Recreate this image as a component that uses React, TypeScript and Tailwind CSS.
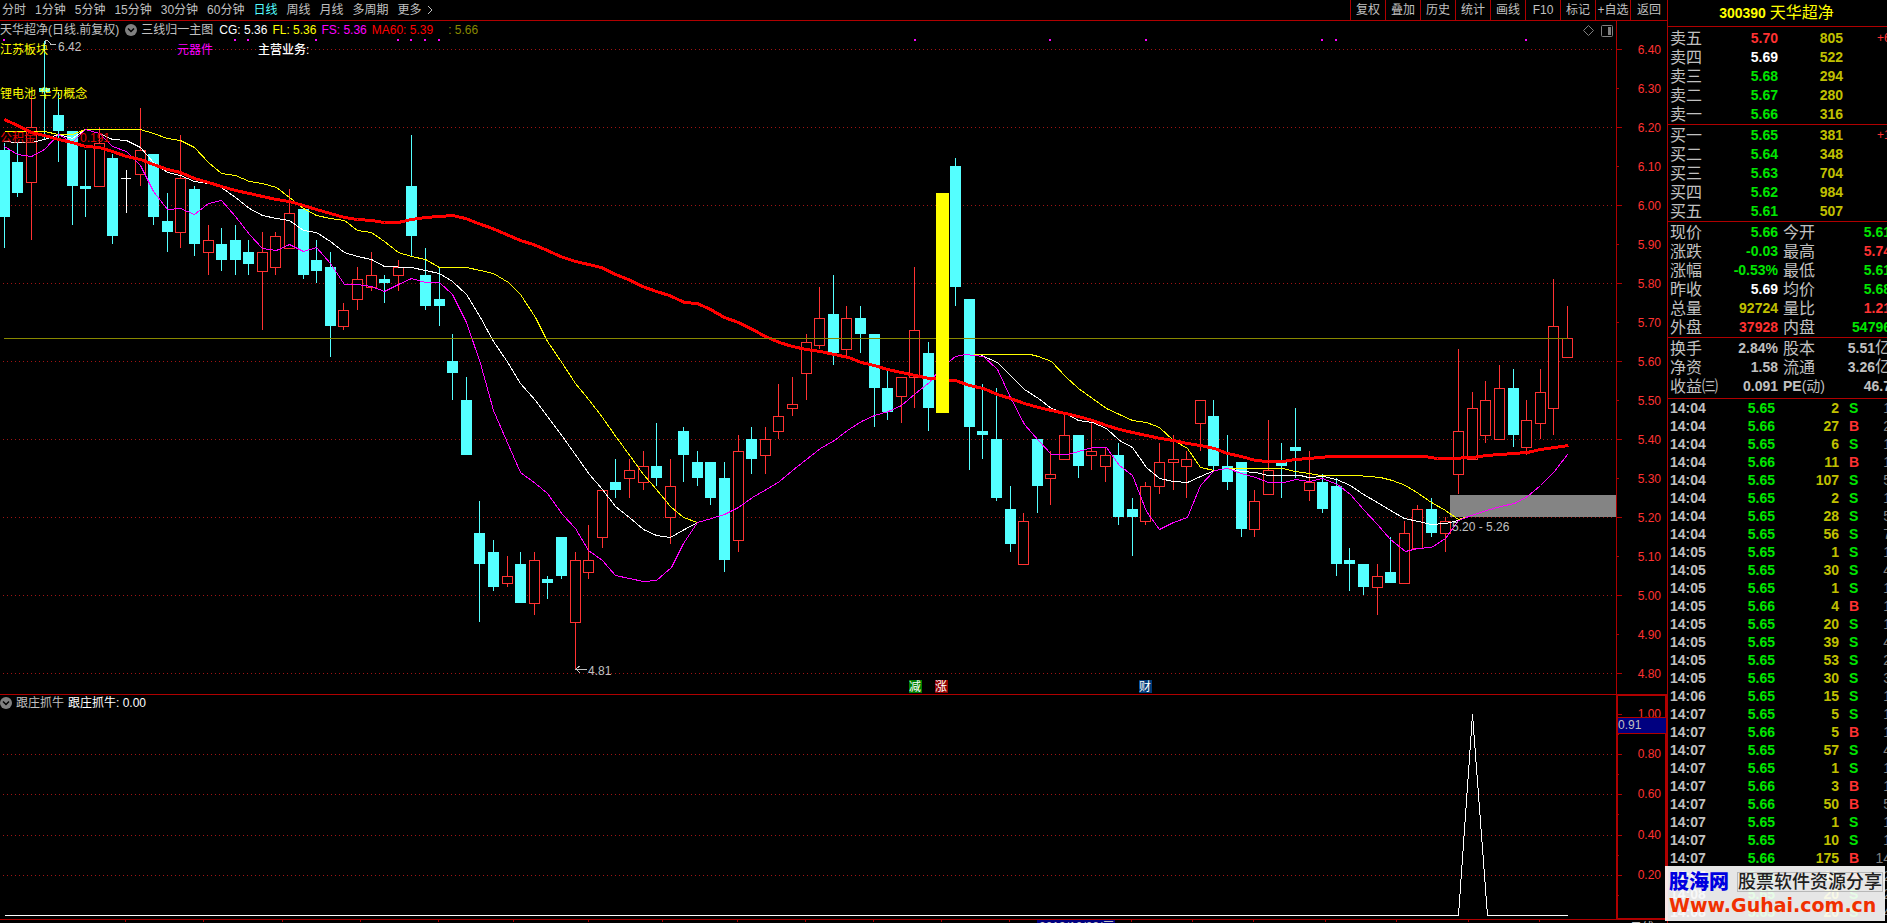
import { clsx } from "clsx";

const FONT = "font-['Liberation_Sans','Noto_Sans_CJK_SC',sans-serif]";

const periods = ["分时", "1分钟", "5分钟", "15分钟", "30分钟", "60分钟", "日线", "周线", "月线", "多周期", "更多"];
const tools = ["复权", "叠加", "历史", "统计", "画线", "F10", "标记", "+自选", "返回"];

// open, high, low, close
const candles: [number, number, number, number][] = [
    [6.14, 6.16, 5.89, 5.97], [6.11, 6.16, 6.02, 6.03], [6.06, 6.28, 5.91, 6.2], [6.3, 6.42, 6.17, 6.29],
    [6.23, 6.29, 6.11, 6.19], [6.19, 6.19, 5.95, 6.05], [6.05, 6.14, 5.97, 6.04], [6.05, 6.2, 6.05, 6.16],
    [6.12, 6.13, 5.9, 5.92], [6.07, 6.09, 5.98, 6.07], [6.08, 6.25, 6.05, 6.14], [6.13, 6.13, 5.95, 5.97],
    [5.96, 6.03, 5.88, 5.93], [5.93, 6.18, 5.89, 6.07], [6.04, 6.05, 5.87, 5.9], [5.88, 5.95, 5.82, 5.91],
    [5.9, 5.94, 5.83, 5.86], [5.91, 5.95, 5.82, 5.86], [5.88, 5.91, 5.82, 5.85], [5.83, 5.93, 5.68, 5.88],
    [5.84, 5.93, 5.82, 5.92], [5.89, 6.04, 5.89, 5.98], [5.99, 5.99, 5.81, 5.82], [5.86, 5.91, 5.8, 5.83],
    [5.84, 5.88, 5.61, 5.69], [5.69, 5.75, 5.68, 5.73], [5.76, 5.84, 5.73, 5.81], [5.79, 5.88, 5.78, 5.82],
    [5.81, 5.82, 5.75, 5.8], [5.82, 5.86, 5.78, 5.84], [6.05, 6.18, 5.87, 5.92], [5.82, 5.89, 5.73, 5.74],
    [5.76, 5.84, 5.69, 5.74], [5.6, 5.67, 5.5, 5.57], [5.5, 5.56, 5.36, 5.36], [5.16, 5.24, 4.93, 5.08],
    [5.11, 5.14, 5.01, 5.02], [5.03, 5.1, 5.02, 5.05], [5.08, 5.11, 4.98, 4.98], [4.98, 5.11, 4.95, 5.09],
    [5.04, 5.05, 4.99, 5.03], [5.15, 5.15, 5.04, 5.05], [4.93, 5.11, 4.81, 5.09], [5.06, 5.18, 5.04, 5.09],
    [5.15, 5.27, 5.12, 5.27], [5.29, 5.35, 5.25, 5.27], [5.3, 5.35, 5.25, 5.32], [5.29, 5.37, 5.27, 5.33],
    [5.33, 5.44, 5.28, 5.3], [5.2, 5.35, 5.13, 5.28], [5.42, 5.43, 5.29, 5.36], [5.34, 5.37, 5.28, 5.3],
    [5.34, 5.34, 5.23, 5.25], [5.3, 5.34, 5.06, 5.09], [5.14, 5.41, 5.11, 5.37], [5.4, 5.43, 5.31, 5.35],
    [5.36, 5.43, 5.31, 5.4], [5.42, 5.54, 5.4, 5.46], [5.48, 5.56, 5.46, 5.49], [5.57, 5.67, 5.5, 5.65],
    [5.64, 5.79, 5.63, 5.71], [5.72, 5.82, 5.59, 5.62], [5.63, 5.74, 5.61, 5.71], [5.71, 5.74, 5.62, 5.67],
    [5.67, 5.67, 5.43, 5.53], [5.53, 5.58, 5.45, 5.47], [5.51, 5.56, 5.44, 5.56], [5.56, 5.84, 5.48, 5.68],
    [5.62, 5.65, 5.42, 5.48], [5.47, 6.03, 5.47, 6.03], [6.1, 6.12, 5.74, 5.79], [5.76, 5.76, 5.32, 5.43],
    [5.42, 5.54, 5.35, 5.41], [5.4, 5.53, 5.24, 5.25], [5.22, 5.28, 5.11, 5.13], [5.08, 5.21, 5.08, 5.19],
    [5.4, 5.4, 5.21, 5.28], [5.3, 5.37, 5.23, 5.31], [5.35, 5.47, 5.35, 5.41], [5.41, 5.41, 5.3, 5.33],
    [5.36, 5.44, 5.32, 5.37], [5.33, 5.38, 5.29, 5.36], [5.36, 5.39, 5.18, 5.2], [5.22, 5.25, 5.1, 5.2],
    [5.19, 5.29, 5.18, 5.28], [5.28, 5.39, 5.26, 5.34], [5.34, 5.41, 5.27, 5.35], [5.33, 5.37, 5.25, 5.35],
    [5.44, 5.5, 5.37, 5.5], [5.46, 5.5, 5.32, 5.33], [5.33, 5.41, 5.27, 5.29], [5.34, 5.34, 5.15, 5.17],
    [5.17, 5.27, 5.15, 5.24], [5.26, 5.45, 5.26, 5.32], [5.34, 5.39, 5.25, 5.33], [5.38, 5.48, 5.3, 5.37],
    [5.27, 5.37, 5.24, 5.29], [5.29, 5.31, 5.21, 5.22], [5.28, 5.3, 5.05, 5.08], [5.09, 5.12, 5.01, 5.08],
    [5.08, 5.08, 5.0, 5.02], [5.02, 5.08, 4.95, 5.05], [5.06, 5.15, 5.03, 5.03], [5.03, 5.19, 5.03, 5.16],
    [5.12, 5.23, 5.12, 5.22], [5.22, 5.25, 5.15, 5.16], [5.16, 5.2, 5.11, 5.19], [5.31, 5.63, 5.26, 5.42],
    [5.35, 5.52, 5.35, 5.48], [5.41, 5.55, 5.39, 5.5], [5.4, 5.59, 5.4, 5.53], [5.53, 5.58, 5.38, 5.41],
    [5.38, 5.5, 5.36, 5.45], [5.44, 5.58, 5.4, 5.52], [5.48, 5.81, 5.41, 5.69], [5.61, 5.74, 5.61, 5.66],
];
const LIMIT_UP = 69;

const priceY = (p: number) => Math.round(49 + (6.4 - p) * 390);
const candleX = (i: number) => Math.floor(4.1 + i * 13.594);

const ma60 =
    "4,119 17,125 31,132 44,135 58,139 72,142 85,146 99,147 112,151 126,156 140,159 153,164 167,169 180,172 194,178 208,182 221,186 235,190 249,193 262,196 276,199 289,201 303,205 316,209 330,213 344,217 357,219 371,220 384,222 398,222 411,219 425,217 439,216 452,215 465,218 478,223 492,228 506,234 520,240 533,244 547,250 560,256 575,261 588,264 601,267 615,274 628,279 642,286 656,291 669,295 684,302 697,303 710,309 724,317 738,322 752,329 765,336 779,342 792,346 806,349 820,351 834,354 848,357 861,362 874,365 887,369 901,372 915,375 929,378 955,380 969,385 983,388 997,394 1010,398 1024,403 1038,407 1051,410 1065,413 1078,416 1092,420 1106,425 1119,429 1132,432 1146,435 1160,438 1173,440 1187,443 1200,445 1214,448 1227,453 1241,456 1255,460 1268,461 1282,461 1295,459 1308,458 1330,456 1424,456 1437,458 1450,458 1472,457 1486,455 1500,454 1513,453 1527,452 1540,449 1554,447 1568,445";
const cg = [
    "4,141 17,142 31,142 44,139 58,134 72,138 85,129 99,133 112,139 126,140 140,147 153,162 167,172 180,175 194,181 208,183 221,187 235,197 249,208 262,215 276,218 289,220 303,230 316,232 330,241 344,252 357,256 371,259 384,266 411,267 439,273 452,281 466,294 480,317 493,341 506,360 520,383 535,400 562,436 589,474 602,489 615,506 629,517 643,529 656,535 670,537 684,529 697,522",
    "981,355 997,362 1010,375 1024,389 1038,398 1051,408 1065,413 1078,420 1092,422 1106,428 1119,440 1132,447 1146,467 1159,478 1173,481 1187,482 1200,476 1214,470 1227,468 1241,471 1255,472 1268,475 1300,475 1308,477 1323,476 1336,479 1350,485 1363,494 1377,502 1390,510 1404,518 1418,521 1431,524 1445,523 1458,520 1463,518",
];
const fl = [
    "4,131 44,131 58,134 72,134 85,129 140,129 153,133 167,138 180,140 194,147 208,162 221,173 235,175 249,181 262,183 276,187 289,197 303,208 316,215 330,218 344,220 357,230 371,232 384,241 398,252 411,256 425,259 439,267 466,267 480,270 493,273 508,282 520,294 535,317 547,341 562,363 575,383 589,400 602,417 616,437 630,456 643,474 656,489 670,506 683,517 697,522",
    "973,354 1030,354 1038,356 1051,361 1065,376 1078,388 1092,398 1106,408 1119,414 1132,420 1146,422 1159,427 1173,440 1187,448 1200,467 1214,470 1227,468 1282,468 1295,471 1309,473 1320,475 1357,475 1380,477 1392,480 1405,485 1418,493 1431,502 1445,510 1458,519 1471,515",
];
const fs =
    "4,146 17,154 31,156 44,149 58,134 72,142 85,129 99,133 112,146 126,151 140,165 153,191 167,209 180,208 194,214 208,203 221,200 235,216 249,234 262,248 276,250 289,244 303,251 316,247 330,263 344,284 357,284 371,286 384,291 398,284 411,278 425,282 439,282 452,294 466,322 480,363 493,410 506,440 520,472 535,483 547,493 562,514 575,528 588,550 602,560 615,575 629,578 643,581 656,580 671,567 683,543 697,522 711,518 724,514 738,507 752,497 766,489 779,481 792,470 806,459 820,448 834,440 847,430 861,421 874,415 888,411 901,405 915,393 929,382 936,373 950,360 955,356 965,354 983,356 997,369 1010,397 1024,424 1038,440 1051,454 1067,454 1078,451 1092,447 1106,447 1119,465 1132,475 1146,511 1159,529 1173,522 1187,517 1200,485 1214,470 1227,468 1241,473 1255,477 1268,482 1284,482 1295,479 1309,481 1322,478 1337,484 1350,494 1363,509 1377,524 1390,539 1405,551 1417,548 1431,547 1445,538 1458,520 1471,515 1486,510 1500,506 1514,503 1527,496 1540,485 1554,471 1567,454";

const signalDots = [4, 235, 248, 316, 398, 411, 425, 439, 915, 1050, 1146, 1322, 1336, 1526];
const badges = [
    { x: 909, text: "减", fill: "#008000" },
    { x: 935, text: "涨", fill: "#900000" },
    { x: 1139, text: "财", fill: "#003a78" },
];
const subLevels: [string, number][] = [["1.00", 714], ["0.80", 754], ["0.60", 794], ["0.40", 835], ["0.20", 875]];
const dateTicks = [125, 203, 282, 360, 438, 513, 588, 662, 737, 805, 873, 941, 1009, 1131, 1192, 1253, 1325, 1396, 1468, 1539];

function Candle({ i }: { i: number }) {
    const [open, high, low, close] = candles[i];
    const x = candleX(i);
    const top = priceY(Math.max(open, close));
    const bottom = priceY(Math.min(open, close));
    const wickTop = priceY(high);
    const wickHeight = priceY(low) - wickTop;

    if (i === LIMIT_UP) return <rect x={x - 6} y={top} width={13} height={bottom - top + 1} fill="#ffff00" />;
    if (open === close) {
        return (
            <g fill="#ffffff">
                <rect x={x} y={wickTop} width={1} height={wickHeight} />
                <rect x={x - 5} y={top} width={10} height={1} />
            </g>
        );
    }
    if (close < open) {
        return (
            <g fill="#54ffff">
                <rect x={x} y={wickTop} width={1} height={wickHeight} />
                <rect x={x - 5} y={top} width={11} height={bottom - top} />
            </g>
        );
    }
    return (
        <g fill="#ff3232">
            <rect x={x} y={wickTop} width={1} height={wickHeight} />
            <rect x={x - 5} y={top} width={11} height={bottom - top + 1} />
            <rect x={x - 4} y={top + 1} width={9} height={bottom - top - 1} fill="#000000" />
        </g>
    );
}

function Grid({ y }: { y: number }) {
    return <path d={`M3 ${y + 0.5}H1613`} stroke="#a01414" strokeDasharray="1 3" />;
}

function Line({ points, color }: { points: string; color: string }) {
    return <polyline points={points} stroke={color} fill="none" transform="translate(.5 .5)" />;
}

function MainChart() {
    const levels = Array.from({ length: 17 }, (_, i) => 6.4 - i * 0.1);
    return (
        <svg viewBox="0 21 1667 673" className="block h-auto w-full text-[12px]" shapeRendering="crispEdges">
            {levels.map((p, i) => i % 2 === 0 && <Grid key={i} y={priceY(p)} />)}
            <rect x={1450} y={495} width={166} height={22} fill="#848484" />
            {candles.map((_, i) => i !== LIMIT_UP && <Candle key={i} i={i} />)}

            <Line points={cg[0]} color="#ffffff" />
            <Line points={cg[1]} color="#ffffff" />
            <Line points={fl[0]} color="#ffff00" />
            <Line points={fl[1]} color="#ffff00" />
            <Line points={fs} color="#ff00ff" />
            <polyline points={ma60} fill="none" stroke="#ff0000" strokeWidth={3} transform="translate(.5 .5)" />
            {/* the limit-up bar covers the averages */}
            <Candle i={LIMIT_UP} />
            <rect x={4} y={338} width={932} height={1} fill="#888800" />
            <rect x={949} y={338} width={619} height={1} fill="#888800" />
            {signalDots.map((x) => <rect key={x} x={x - 1} y={39} width={2} height={2} fill="#ff00ff" />)}

            {/* high / low markers */}
            <path d="M45 40.5h3M45 40v4M48 41l3 3M50 44.5h6" stroke="#c0c0c0" fill="none" />
            <path d="M575 669.5h12M576 669l4-3M576 669l4 4" stroke="#c0c0c0" fill="none" />
            <g fill="#c0c0c0">
                <text x={58} y={51}>6.42</text>
                <text x={588} y={675}>4.81</text>
                <text x={1452} y={531}>5.20 - 5.26</text>
            </g>
            <g fill="#ffff00">
                <text x={0} y={54}>江苏板块</text>
                <text x={0} y={98}>锂电池 华为概念</text>
            </g>
            <text x={177} y={54} fill="#ff00ff">元器件</text>
            <text x={258} y={54} fill="#ffffff" fontWeight={500}>主营业务:</text>
            <g fill="#e00000">
                <text x={0} y={142}>公积金</text>
                <text x={80} y={142}>0.191</text>
            </g>
            {badges.map((b) => (
                <g key={b.x}>
                    <rect x={b.x} y={680} width={13} height={13} fill={b.fill} />
                    <text x={b.x} y={691} fill="#ffffff">{b.text}</text>
                </g>
            ))}

            {/* price axis */}
            <rect x={1616} y={21} width={1} height={673} fill="#b00000" />
            {levels.map((p, i) => (
                <g key={i}>
                    <rect x={1617} y={priceY(p)} width={i % 2 ? 2 : 5} height={1} fill="#b00000" />
                    <text x={1661} y={priceY(p) + 5} textAnchor="end" fill="#ff3232">{p.toFixed(2)}</text>
                </g>
            ))}
        </svg>
    );
}

function SubChart() {
    return (
        <svg viewBox="0 694 1667 229" className="block h-auto w-full text-[12px]" shapeRendering="crispEdges">
            <rect x={0} y={694} width={1667} height={1} fill="#b00000" />
            {subLevels.slice(1).map(([label, y]) => <Grid key={label} y={y} />)}
            <Line points="4,915 1458,915 1472,714 1487,915 1567,915" color="#ffffff" />

            <rect x={1617} y={695} width={49} height={224} fill="none" stroke="#b00000" strokeWidth={2} />
            {subLevels.map(([label, y]) => (
                <g key={label}>
                    <rect x={1618} y={y} width={4} height={1} fill="#b00000" />
                    <rect x={1618} y={y + 20} width={1} height={1} fill="#b00000" />
                    <text x={1661} y={y + 4} textAnchor="end" fill="#ff3232">{label}</text>
                </g>
            ))}
            <rect x={1618} y={717} width={48} height={17} fill="#b00000" />
            <rect x={1618} y={718} width={48} height={15} fill="#000080" />
            <text x={1618} y={729} fill="#c0c0c0">0.91</text>

            <rect x={0} y={919} width={1616} height={1} fill="#b00000" />
            {dateTicks.map((x) => <rect key={x} x={x} y={920} width={1} height={2} fill="#b00000" />)}
            <rect x={1037} y={920} width={78} height={3} fill="#000080" />
            <text x={1039} y={931} fill="#c0c0c0">2019/10/09/三</text>
            <text x={1630} y={932} fill="#c0c0c0">日线</text>
        </svg>
    );
}

function Chevron() {
    return (
        <svg viewBox="0 0 12 12" className="size-3 shrink-0">
            <circle cx={6} cy={6} r={6} fill="#808080" />
            <path d="M3 4.5l3 3 3-3" fill="none" stroke="#000000" strokeWidth={1.5} />
        </svg>
    );
}

const tone = {
    red: "text-[#ff3232]",
    green: "text-[#00e600]",
    white: "text-white",
    yellow: "text-[#c0c000]",
    gray: "text-[#c0c0c0]",
};
type Tone = keyof typeof tone;

const asks: [string, string, Tone, string, string?][] = [
    ["卖五", "5.70", "red", "805", "+6"],
    ["卖四", "5.69", "white", "522"],
    ["卖三", "5.68", "green", "294"],
    ["卖二", "5.67", "green", "280"],
    ["卖一", "5.66", "green", "316"],
];
const bids: typeof asks = [
    ["买一", "5.65", "green", "381", "+1"],
    ["买二", "5.64", "green", "348"],
    ["买三", "5.63", "green", "704"],
    ["买四", "5.62", "green", "984"],
    ["买五", "5.61", "green", "507"],
];
const quotes: [string, string, Tone, string, string, Tone][] = [
    ["现价", "5.66", "green", "今开", "5.61", "green"],
    ["涨跌", "-0.03", "green", "最高", "5.74", "red"],
    ["涨幅", "-0.53%", "green", "最低", "5.61", "green"],
    ["昨收", "5.69", "white", "均价", "5.68", "green"],
    ["总量", "92724", "yellow", "量比", "1.21", "red"],
    ["外盘", "37928", "red", "内盘", "54796", "green"],
];
const basics: typeof quotes = [
    ["换手", "2.84%", "gray", "股本", "5.51亿", "gray"],
    ["净资", "1.58", "gray", "流通", "3.26亿", "gray"],
    ["收益㈢", "0.091", "gray", "PE(动)", "46.7", "gray"],
];
const ticks: [string, string, number, string, string][] = [
    ["14:04", "5.65", 2, "S", "1"], ["14:04", "5.66", 27, "B", "2"], ["14:04", "5.65", 6, "S", "1"],
    ["14:04", "5.66", 11, "B", "1"], ["14:04", "5.65", 107, "S", "5"], ["14:04", "5.65", 2, "S", "1"],
    ["14:04", "5.65", 28, "S", "5"], ["14:04", "5.65", 56, "S", "7"], ["14:05", "5.65", 1, "S", "1"],
    ["14:05", "5.65", 30, "S", "4"], ["14:05", "5.65", 1, "S", "1"], ["14:05", "5.66", 4, "B", "1"],
    ["14:05", "5.65", 20, "S", "1"], ["14:05", "5.65", 39, "S", "4"], ["14:05", "5.65", 53, "S", "2"],
    ["14:05", "5.65", 30, "S", "3"], ["14:06", "5.65", 15, "S", "1"], ["14:07", "5.65", 5, "S", "1"],
    ["14:07", "5.66", 5, "B", "1"], ["14:07", "5.65", 57, "S", "4"], ["14:07", "5.65", 1, "S", "1"],
    ["14:07", "5.66", 3, "B", "1"], ["14:07", "5.66", 50, "B", "5"], ["14:07", "5.65", 1, "S", "1"],
    ["14:07", "5.65", 10, "S", "1"], ["14:07", "5.66", 175, "B", "14"], ["14:07", "5.66", 16, "B", "2"],
    ["14:08", "5.65", 20, "S", "2"], ["14:08", "5.65", 20, "S", "4"],
];

function Book({ rows }: { rows: typeof asks }) {
    return (
        <table className="w-[230px] table-fixed">
            <tbody>
                {rows.map(([label, price, color, volume, diff]) => (
                    <tr key={label} className="h-[19px]">
                        <th className="w-[46px] text-left text-base leading-[19px] font-normal">{label}</th>
                        <td className={clsx("w-[62px] text-right", tone[color])}>{price}</td>
                        <td className="w-[65px] text-right text-[#c0c000]">{volume}</td>
                        <td className="pl-[34px] text-xs leading-[19px] font-normal text-[#ff3232]">{diff}</td>
                    </tr>
                ))}
            </tbody>
        </table>
    );
}

function Stats({ rows }: { rows: typeof quotes }) {
    return (
        <table className="w-[221px] table-fixed">
            <tbody>
                {rows.map(([l1, v1, c1, l2, v2, c2]) => (
                    <tr key={l1} className="h-[19px] whitespace-nowrap">
                        <th className="w-[48px] text-left text-base leading-[19px] font-normal">{l1}</th>
                        <td className={clsx("w-[60px] text-right", tone[c1])}>{v1}</td>
                        <th className={clsx("w-[48px] pl-[5px] text-left font-normal", !l2.startsWith("PE") && "text-base leading-[19px]")}>
                            {l2.startsWith("PE") ? <><b>PE</b>(动)</> : l2}
                        </th>
                        <td className={clsx("text-right", tone[c2])}>
                            {v2.replace("亿", "")}
                            {v2.endsWith("亿") && <span className="text-base leading-none font-normal">亿</span>}
                        </td>
                    </tr>
                ))}
            </tbody>
        </table>
    );
}

function Sidebar() {
    return (
        <aside className="relative w-[220px] shrink-0 overflow-hidden border-l border-[#b00000] text-sm leading-[19px] font-bold">
            <h1 className="flex h-[27px] items-center justify-center gap-1 border-b border-[#b00000] pr-[2px] text-[#ffff00]">
                300390 <span className="text-base font-normal">天华超净</span>
            </h1>
            <section className="border-b border-[#b00000] pt-[2px] pl-[2px]"><Book rows={asks} /></section>
            <section className="border-b border-[#b00000] pt-px pl-[2px]"><Book rows={bids} /></section>
            <section className="border-b border-[#b00000] pt-px pl-[2px]"><Stats rows={quotes} /></section>
            <section className="border-b border-[#b00000] pt-px pb-[2px] pl-[2px]"><Stats rows={basics} /></section>
            <table className="ml-[2px] w-[221px] table-fixed leading-[18px]">
                <tbody>
                    {ticks.map(([time, price, volume, side, count], i) => (
                        <tr key={i} className="h-[18px]">
                            <td className="w-[46px]">{time}</td>
                            <td className="w-[59px] text-right text-[#00e600]">{price}</td>
                            <td className="w-[64px] text-right text-[#c0c000]">{volume}</td>
                            <td className={clsx("w-[24px] pl-[10px]", side === "S" ? "text-[#00e600]" : "text-[#ff3232]")}>{side}</td>
                            <td className="text-right font-normal text-[#808080]">{count}</td>
                        </tr>
                    ))}
                </tbody>
            </table>
        </aside>
    );
}

function Watermark() {
    return (
        <a href="#" className="absolute right-[2px] bottom-[2px] block h-[55px] w-[220px] bg-white/90 pt-1 pl-1 whitespace-nowrap">
            <span className="flex h-6 items-center gap-2">
                <span className="text-xl leading-6 font-black text-[#0000e0]">股海网</span>
                <span className="border border-[#b8b8b8] text-lg leading-[18px] font-medium text-[#202020]">股票软件资源分享</span>
            </span>
            <span className="block font-['DejaVu_Sans',sans-serif] text-[19px] leading-[22px] font-bold text-[#f03000]">Www.Guhai.com.cn</span>
        </a>
    );
}

export default function App() {
    return (
        <div className={clsx("relative flex h-screen overflow-hidden bg-black text-xs text-[#c0c0c0]", FONT)}>
            <main className="flex min-w-0 flex-1 flex-col">
                <nav className="flex h-[21px] shrink-0 justify-between border-b border-[#b00000]">
                    <div className="flex items-center gap-[9px] pl-[2px] leading-5">
                        {periods.map((p) => (
                            <button key={p} className={p === "日线" ? "text-[#54ffff]" : ""}>{p}</button>
                        ))}
                        <svg viewBox="0 0 6 10" className="-ml-1 h-[10px] w-[6px]">
                            <path d="M1 1l4 4-4 4" fill="none" stroke="#c0c0c0" />
                        </svg>
                    </div>
                    <div className="flex">
                        {tools.map((t) => (
                            <button key={t} className="w-[35px] border-l border-[#b00000] leading-5 whitespace-nowrap last:w-[37px]">{t}</button>
                        ))}
                    </div>
                </nav>

                <div className="relative">
                    <MainChart />
                    <div className="absolute inset-x-0 top-0 flex h-[18px] items-center whitespace-nowrap">
                        <span>天华超净(日线.前复权)</span>
                        <span className="mr-1 ml-[6px] flex"><Chevron /></span>
                        <span>三线归一主图</span>
                        <span className="ml-[6px] flex gap-[5px]">
                            <span className="text-white">CG: 5.36</span>
                            <span className="text-[#ffff00]">FL: 5.36</span>
                            <span className="text-[#ff00ff]">FS: 5.36</span>
                            <span className="text-[#ff0000]">MA60: 5.39</span>
                            <span className="pl-[10px] text-[#888800]">: 5.66</span>
                        </span>
                        <svg viewBox="0 0 32 14" className="mr-[53px] ml-auto h-[14px] w-8" fill="none" stroke="#808080">
                            <path d="M6.5 2.5l5 5-5 5-5-5z" />
                            <rect x={19.5} y={2.5} width={11} height={11} rx={1} />
                            <rect x={26} y={4} width={3} height={8} fill="#808080" stroke="none" />
                        </svg>
                    </div>
                </div>

                <div className="relative">
                    <SubChart />
                    <div className="absolute inset-x-0 top-0 flex h-[18px] items-center gap-1">
                        <Chevron />
                        <span>跟庄抓牛</span>
                        <span className="text-white">跟庄抓牛: 0.00</span>
                    </div>
                </div>
            </main>
            <Sidebar />
            <Watermark />
        </div>
    );
}
